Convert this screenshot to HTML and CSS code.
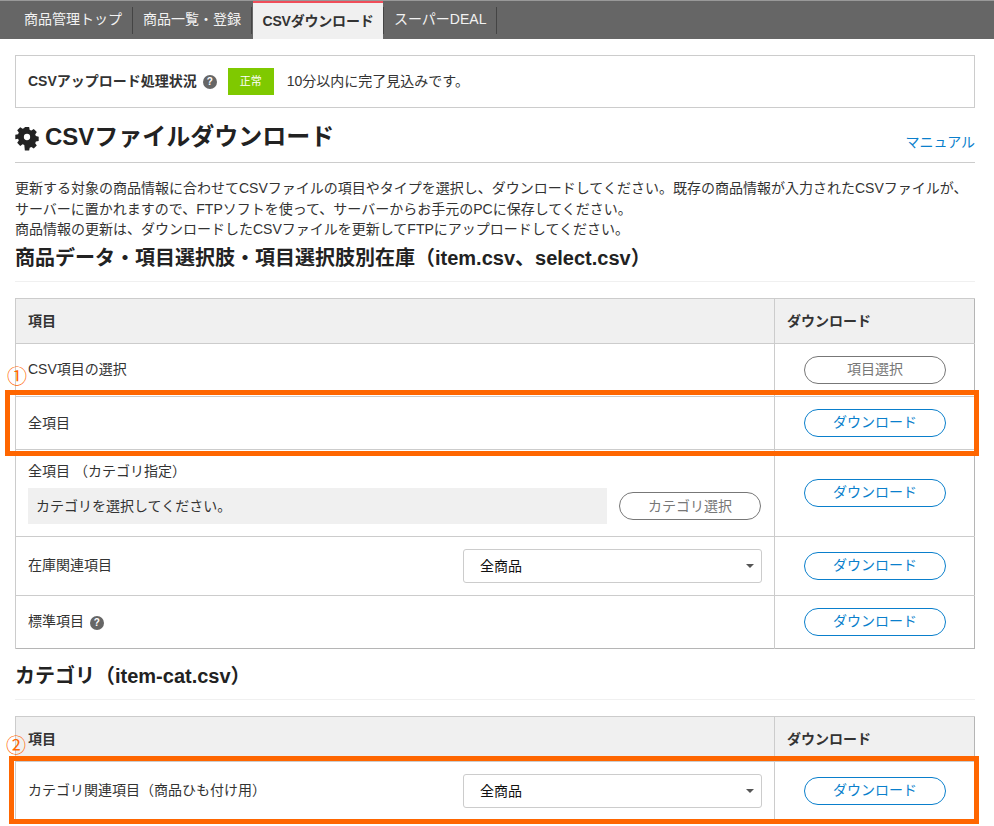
FILE: index.html
```html
<!DOCTYPE html>
<html lang="ja">
<head>
<meta charset="utf-8">
<title>CSVダウンロード</title>
<link rel="stylesheet" href="styles.css">
</head>
<body>
<nav class="tabs">
  <a class="tab">商品管理トップ</a>
  <a class="tab">商品一覧・登録</a>
  <a class="tab active">CSVダウンロード</a>
  <a class="tab">スーパーDEAL</a>
</nav>
<main class="page">
  <section class="status">
    <strong>CSVアップロード処理状況</strong>
    <span class="help">?</span>
    <span class="badge">正常</span>
    <span>10分以内に完了見込みです。</span>
  </section>
  <header class="title-row">
    <h1>
      <svg class="gear" viewBox="0 0 24 24" aria-hidden="true"><path fill-rule="evenodd" d="M9.6 1h4.8l.6 3.1 1.9.8 2.6-1.8 3.400 3.400-1.800 2.600.8 1.900 3.100.6v4.800l-3.100.6-.8 1.900 1.800 2.600-3.400 3.400-2.600-1.800-1.900.8-.6 3.100H9.600L9 20.900l-1.900-.8-2.600 1.800-3.400-3.400 1.800-2.600-.8-1.900L-1 14.400V9.600L2.100 9l.8-1.900L1.100 4.500l3.400-3.400 2.600 1.800L9 2.100z M12 8.500a3.500 3.500 0 1 0 0 7 3.500 3.500 0 0 0 0-7z" transform="translate(1.200 1.200) scale(.9)"/></svg>
      CSVファイルダウンロード
    </h1>
    <a class="manual">マニュアル</a>
  </header>
  <p class="intro">更新する対象の商品情報に合わせてCSVファイルの項目やタイプを選択し、ダウンロードしてください。既存の商品情報が入力されたCSVファイルが、サーバーに置かれますので、FTPソフトを使って、サーバーからお手元のPCに保存してください。<br>商品情報の更新は、ダウンロードしたCSVファイルを更新してFTPにアップロードしてください。</p>

  <h2>商品データ・項目選択肢・項目選択肢別在庫（item.csv、select.csv）</h2>
  <table class="grid first">
    <thead><tr><th>項目</th><th class="col-dl">ダウンロード</th></tr></thead>
    <tbody>
      <tr class="r52"><td>CSV項目の選択</td><td class="col-dl"><button class="pill gray">項目選択</button></td></tr>
      <tr class="r53"><td>全項目</td><td class="col-dl"><button class="pill">ダウンロード</button></td></tr>
      <tr class="r87"><td>
        <div class="cat-label">全項目 （カテゴリ指定）</div>
        <div class="cat-row"><div class="cat-box">カテゴリを選択してください。</div><button class="pill gray">カテゴリ選択</button></div>
      </td><td class="col-dl"><button class="pill">ダウンロード</button></td></tr>
      <tr class="r59"><td><div class="sel-row"><span>在庫関連項目</span><div class="select">全商品<i class="caret"></i></div></div></td><td class="col-dl"><button class="pill">ダウンロード</button></td></tr>
      <tr class="r54"><td>標準項目 <span class="help inline">?</span></td><td class="col-dl"><button class="pill">ダウンロード</button></td></tr>
    </tbody>
  </table>

  <h2 class="second">カテゴリ（item-cat.csv）</h2>
  <table class="grid">
    <thead><tr><th>項目</th><th class="col-dl">ダウンロード</th></tr></thead>
    <tbody>
      <tr class="r59"><td><div class="sel-row"><span>カテゴリ関連項目（商品ひも付け用）</span><div class="select">全商品<i class="caret"></i></div></div></td><td class="col-dl"><button class="pill">ダウンロード</button></td></tr>
    </tbody>
  </table>
</main>
<div class="mark box-one"></div>
<div class="mark box-two"></div>
<span class="num num-one">①</span>
<span class="num num-two">②</span>
</body>
</html>
```

FILE: styles.css
```css
* { box-sizing: border-box; }
html, body { height: 826px; overflow: hidden; }
body {
  margin: 0;
  position: relative;
  background: #fff;
  color: #333;
  font: 14px/20.5px "Liberation Sans", "Noto Sans CJK JP", sans-serif;
}
.tabs {
  display: flex;
  height: 39px;
  padding-left: 14px;
  background: #666;
  border-top: 1px solid #999;
}
.tab {
  display: flex;
  align-items: center;
  padding: 0 10px 2px 10px;
  margin: 6px 0 5px;
  color: #f2f2f2;
  border-right: 1px solid #444;
}
.tab.active {
  margin: 0 0 0 1px;
  width: 130px;
  justify-content: center;
  padding: 0;
  background: #f0f0f0;
  color: #333;
  font-weight: bold;
  letter-spacing: -0.2px;
  border-top: 2px solid #f04e5a;
  border-right: 0;
}
.tab.active + .tab { border-left: 1px solid #444; }
.page { padding: 16px 19px 0 15px; }
.status {
  display: flex;
  align-items: center;
  height: 53px;
  padding-left: 12px;
  border: 1px solid #ccc;
}
.help {
  display: inline-flex;
  align-items: center;
  justify-content: center;
  width: 14px;
  height: 14px;
  margin: 0 0 0 6px;
  border-radius: 50%;
  background: #666;
  color: #fff;
  font-size: 10px;
  line-height: 14px;
  font-weight: bold;
}
.help.inline { margin-left: 2px; vertical-align: 0; }
.badge {
  display: flex;
  align-items: center;
  justify-content: center;
  width: 46px;
  height: 27px;
  margin: 0 13px 0 11px;
  background: #7fc900;
  color: #fff;
  font-size: 11px;
}
.title-row {
  display: flex;
  justify-content: space-between;
  align-items: flex-end;
  height: 55px;
  padding-bottom: 9px;
  border-bottom: 1px solid #ccc;
}
h1 {
  display: flex;
  align-items: center;
  gap: 6px;
  margin: 0;
  font-size: 24px;
  line-height: 32px;
  color: #222;
}
.gear { width: 24px; height: 24px; fill: #222; overflow: visible; }
.manual { margin-bottom: 2px; color: #0a7fcc; line-height: 18px; }
.intro { margin: 15px 0 4px; line-height: 20.5px; }
h2 {
  margin: 0;
  height: 38px;
  font-size: 20px;
  line-height: 28px;
  color: #222;
  border-bottom: 1px solid #f0f0f0;
}
h2.second { margin-top: 13px; height: 38px; }
.grid {
  width: 960px;
  margin-top: 16px;
  border-collapse: collapse;
  table-layout: fixed;
  border: 1px solid #b5b5b5;
}
.grid th, .grid td {
  padding: 0 12px;
  border-top: 1px solid #ccc;
  border-left: 1px solid #ccc;
  text-align: left;
  vertical-align: middle;
}
.grid th { height: 45px; padding-top: 1px; background: #f0f0f0; }
.grid .col-dl { width: 200px; }
.grid td.col-dl { padding: 0 29px; }
.r52 td { height: 53px; }
.r53 td { height: 53px; padding-top: 1px; }
.r87 td { height: 87px; }
.r59 td { height: 59px; }
.r54 td { height: 53px; }
.pill {
  display: block;
  width: 142px;
  height: 28px;
  margin: 0;
  padding: 0;
  border: 1px solid #0a7fcc;
  border-radius: 14px;
  background: #fff;
  color: #0a7fcc;
  font: inherit;
  cursor: pointer;
}
.pill.gray { border-color: #777; color: #777; }
.cat-label { margin-bottom: 7px; }
.cat-row { display: flex; justify-content: space-between; align-items: center; }
.cat-box {
  width: 579px;
  height: 36px;
  padding: 0 8px;
  background: #f0f0f0;
  line-height: 36px;
}
.cat-row .pill { margin-right: 1px; }
.sel-row { display: flex; justify-content: space-between; align-items: center; }
.select {
  position: relative;
  width: 299px;
  height: 34px;
  padding-left: 16px;
  border: 1px solid #ccc;
  border-radius: 3px;
  background: #fff;
  color: #111;
  line-height: 32px;
}
.caret {
  position: absolute;
  right: 7px;
  top: 14px;
  border: 4px solid transparent;
  border-top: 4px solid #555;
  border-bottom: 0;
}
.mark {
  position: absolute;
  border: 5px solid #ff6600;
}
.box-one { left: 5px; top: 390px; width: 974px; height: 66px; }
.box-two { left: 9px; top: 756px; width: 970px; height: 68px; }
.num {
  position: absolute;
  color: #ff6600;
  font-size: 20px;
  line-height: 20px;
  font-family: "Noto Sans CJK JP", sans-serif;
}
.num-one { left: 7px; top: 366px; }
.num-two { left: 6px; top: 735px; }
```
